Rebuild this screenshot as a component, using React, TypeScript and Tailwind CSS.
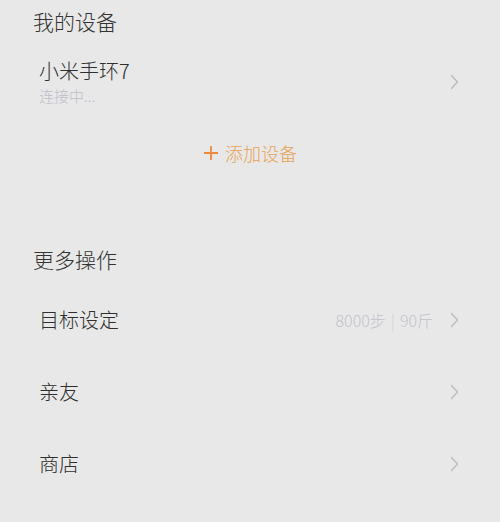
import React from 'react';

const font = { fontFamily: '"Noto Sans CJK SC", "Noto Sans", sans-serif' };

const Chevron: React.FC = () => (
  <svg width="9" height="16" viewBox="0 0 9 16" className="shrink-0">
    <polyline points="1.5,1.5 7.5,8 1.5,14.5" fill="none" stroke="#b9b9bf" strokeWidth="1.3" strokeLinecap="round" strokeLinejoin="round" />
  </svg>
);

const Row: React.FC<{ label: string; value?: React.ReactNode }> = ({ label, value }) => (
  <div className="h-[72px] shrink-0 flex items-center justify-between pl-[39px] pr-[41px]">
    <span className="text-[20px] font-light text-[#2e2e2e] leading-[28px]">{label}</span>
    <div className="flex items-center gap-[17px]">
      {value}
      <Chevron />
    </div>
  </div>
);

export default function App() {
  return (
    <div className="w-[500px] h-[522px] overflow-hidden bg-[#e8e8e8]" style={font}>
      {/* 我的设备 */}
      <div className="h-[42px] flex items-center px-[33px]">
        <span className="text-[21px] font-light text-[#333333] leading-[30px]">我的设备</span>
      </div>

      <div className="flex items-center justify-between pl-[39px] pr-[41px] pt-[16px]">
        <div className="flex flex-col">
          <span className="text-[20px] font-light text-[#2e2e2e] leading-[26px]">小米手环7</span>
          <span className="text-[15px] font-light text-[#bebdc9] leading-[20px] mt-[2px]">连接中...</span>
        </div>
        <Chevron />
      </div>

      <div className="h-[40px] mt-[27px] flex items-center justify-center gap-[6px]">
        <svg width="16" height="16" viewBox="0 0 16 16">
          <path d="M8 1v14M1 8h14" stroke="#ee8a3c" strokeWidth="1.8" />
        </svg>
        <span className="text-[18px] font-light text-[#e9a055] leading-[26px]">添加设备</span>
      </div>

      {/* 更多操作 */}
      <div className="h-[42px] mt-[65px] flex items-center px-[33px]">
        <span className="text-[21px] font-light text-[#333333] leading-[30px]">更多操作</span>
      </div>

      <div className="mt-[4px]">
        <Row
          label="目标设定"
          value={
            <span className="text-[16px] font-light text-[#c3c2cc] leading-[22px]">
              8000步<span className="mx-[5px] text-[#d0d0d6]">|</span>90斤
            </span>
          }
        />
        <Row label="亲友" />
        <Row label="商店" />
        <Row label="设置" />
      </div>
    </div>
  );
}
